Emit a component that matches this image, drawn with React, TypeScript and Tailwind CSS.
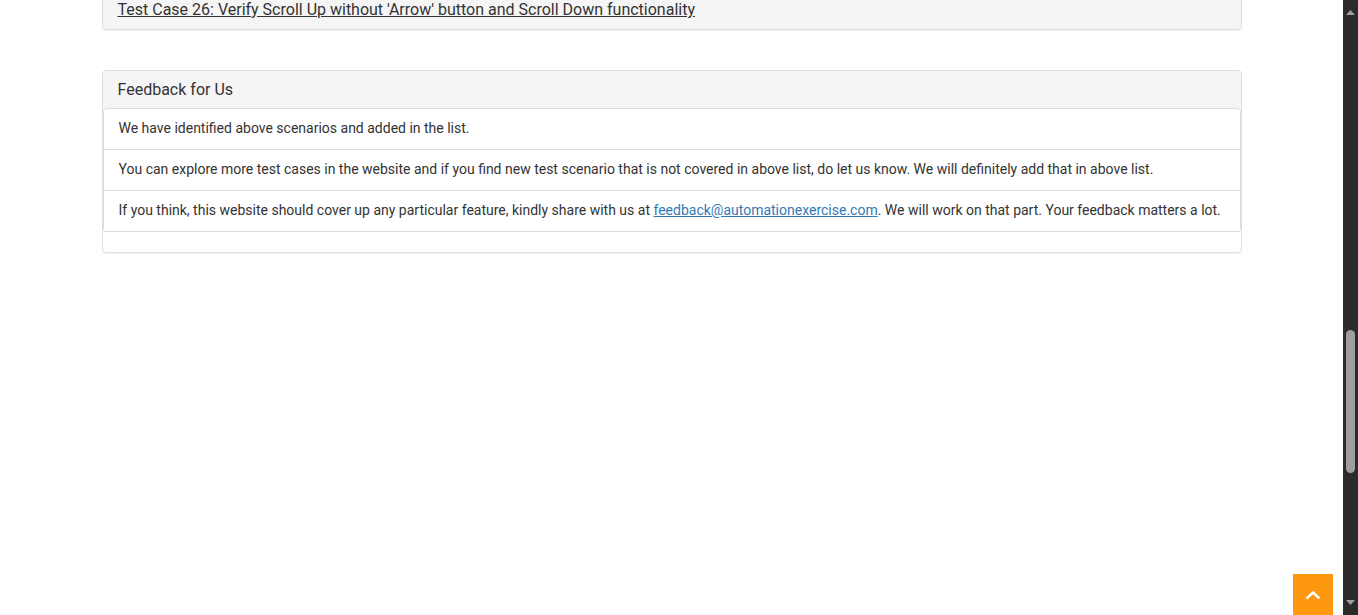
import { ReactNode } from 'react'

function ListItem({ children }: { children: ReactNode }) {
  return (
    <li className="border-b border-[#ddd] px-[15px] pt-[9px] pb-[11px] text-[14px] leading-[20px] text-[#333]">
      {children}
    </li>
  )
}

function ScrollBar() {
  return (
    <div className="w-[15px] shrink-0 bg-[#2b2b2b] flex flex-col items-center">
      <div className="h-[24px] flex items-center justify-center pt-[1px]">
        <svg width="9" height="5" viewBox="0 0 9 5">
          <polygon points="0,5 4.5,0 9,5" fill="#9e9e9e" />
        </svg>
      </div>
      <div className="mt-[306px] h-[143px] w-[9px] rounded-full bg-[#9e9e9e]" />
      <div className="flex-1" />
      <div className="h-[24px] flex items-center justify-center pb-[1px]">
        <svg width="9" height="5" viewBox="0 0 9 5">
          <polygon points="0,0 9,0 4.5,5" fill="#9e9e9e" />
        </svg>
      </div>
    </div>
  )
}

export default function App() {
  return (
    <div className="flex h-[615px] w-[1358px] overflow-hidden bg-white" style={{ fontFamily: 'Roboto, "Liberation Sans", sans-serif' }}>
      <div className="relative flex-1">
        <div className="mx-auto w-[1140px]">
          {/* previous test case panel, partly scrolled out */}
          <div className="mt-[-10px] rounded-[4px] border border-[#ddd] bg-white shadow-[0_1px_1px_rgba(0,0,0,0.05)]">
            <div className="rounded-[3px] bg-[#f5f5f5] px-[15px] py-[10px]">
              <h4 className="text-[16px] leading-[17.6px] text-[#333]">
                <a className="underline" href="#">Test Case 26: Verify Scroll Up without 'Arrow' button and Scroll Down functionality</a>
              </h4>
            </div>
          </div>

          <div className="mt-[40px] rounded-[4px] border border-[#ddd] bg-white shadow-[0_1px_1px_rgba(0,0,0,0.05)]">
            <div className="rounded-t-[3px] bg-[#f5f5f5] px-[15px] py-[10px]">
              <h4 className="text-[16px] leading-[17.6px] text-[#333]">Feedback for Us</h4>
            </div>
            <ul className="mb-[20px] rounded-[4px] border-x border-t border-[#ddd]">
              <ListItem>We have identified above scenarios and added in the list.</ListItem>
              <ListItem>
                You can explore more test cases in the website and if you find new test scenario that is not covered in above list, do let us know. We will definitely add that in above list.
              </ListItem>
              <ListItem>
                If you think, this website should cover up any particular feature, kindly share with us at{' '}
                <a className="text-[#337ab7] underline" href="#">feedback@automationexercise.com</a>. We will work on that part. Your feedback matters a lot.
              </ListItem>
            </ul>
          </div>
        </div>

        <a
          href="#"
          className="absolute right-[10px] bottom-[-3px] flex h-[44px] w-[40px] items-center justify-center bg-[#fe980f]"
        >
          <svg width="18" height="12" viewBox="0 0 18 12" className="mb-[2px]">
            <polyline points="2.5,9.5 9,3.5 15.5,9.5" fill="none" stroke="#fff" strokeWidth="2.5" />
          </svg>
        </a>
      </div>
      <ScrollBar />
    </div>
  )
}
